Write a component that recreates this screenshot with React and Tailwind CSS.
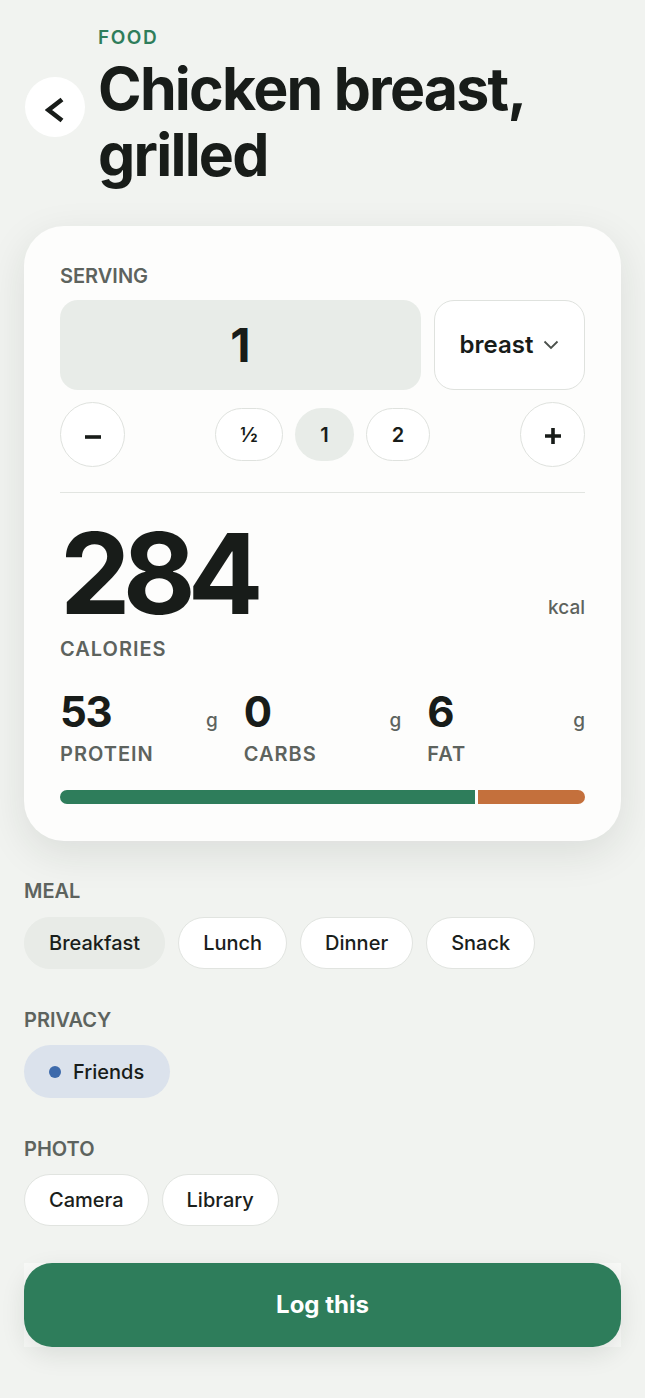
import React from "react";

const font = { fontFamily: "Inter, 'Noto Sans', sans-serif" };

function Pill({ children, active, className = "" }) {
  return (
    <div
      className={
        "h-[52px] px-[24px] rounded-full flex items-center justify-center text-[20px] font-medium text-[#1a1e1b] border " +
        (active ? "bg-[#e8ebe7] border-[#e8ebe7] " : "bg-white border-[#e1e4e0] ") +
        className
      }
    >
      {children}
    </div>
  );
}

function Label({ children, className = "" }) {
  return (
    <div className={"text-[20px] leading-[24px] font-semibold text-[#5d635e] " + className}>{children}</div>
  );
}

export default function App() {
  return (
    <div className="min-h-[1398px] w-[645px] bg-[#f1f3f0] text-[#181c19]" style={font}>
      {/* Header */}
      <div className="flex items-center pl-[25px] pt-[26px]">
        <div className="w-[60px] h-[60px] rounded-full bg-white flex items-center justify-center shrink-0">
          <svg width="20" height="26" viewBox="0 0 20 26" className="mt-[6px]">
            <path d="M17 2.5 L3.5 13 L17 23.5" fill="none" stroke="#181c19" strokeWidth="4.6" strokeLinejoin="miter" />
          </svg>
        </div>
        <div className="ml-[13px]">
          <div className="text-[19px] leading-[24px] font-semibold tracking-[0.08em] text-[#2e7d5b]">FOOD</div>
          <div className="mt-[6px] text-[59px] leading-[66px] font-bold tracking-[-0.03em] text-[#181c19]">
            Chicken breast,
            <br />
            grilled
          </div>
        </div>
      </div>

      {/* Card */}
      <div className="mx-[24px] mt-[38px] rounded-[40px] bg-[#fdfdfc] px-[36px] pt-[38px] pb-[37px] shadow-[0_12px_40px_rgba(30,40,30,0.10)]">
        <Label>SERVING</Label>
        <div className="mt-[12px] flex gap-[13px]">
          <div className="w-[361px] h-[90px] rounded-[18px] bg-[#e8ece8] flex items-center justify-center text-[47px] font-bold">
            1
          </div>
          <div className="flex-1 h-[90px] rounded-[20px] border border-[#dfe2de] bg-white flex items-center justify-center gap-[10px]">
            <span className="text-[24px] font-semibold">breast</span>
            <svg width="16" height="10" viewBox="0 0 16 10">
              <path d="M1.5 1.5 L8 8 L14.5 1.5" fill="none" stroke="#4a504b" strokeWidth="1.8" />
            </svg>
          </div>
        </div>
        <div className="mt-[12px] flex items-center justify-between">
          <div className="w-[65px] h-[65px] rounded-full border border-[#dfe2de] bg-white flex items-center justify-center">
            <svg width="18" height="6" viewBox="0 0 18 6" className="mt-[4px]">
              <path d="M1 3 H17" stroke="#181c19" strokeWidth="3.6" />
            </svg>
          </div>
          <div className="flex items-center gap-[12px]">
            <div className="w-[68px] h-[53px] rounded-full border border-[#dfe2de] bg-white flex items-center justify-center text-[20px] font-semibold">
              ½
            </div>
            <div className="w-[59px] h-[53px] rounded-full bg-[#e8ece8] flex items-center justify-center text-[20px] font-semibold">
              1
            </div>
            <div className="w-[64px] h-[53px] rounded-full border border-[#dfe2de] bg-white flex items-center justify-center text-[20px] font-semibold">
              2
            </div>
          </div>
          <div className="w-[65px] h-[65px] rounded-full border border-[#dfe2de] bg-white flex items-center justify-center">
            <svg width="18" height="18" viewBox="0 0 18 18" className="mt-[2px]">
              <path d="M1 9 H17 M9 1 V17" stroke="#181c19" strokeWidth="3.6" />
            </svg>
          </div>
        </div>
        <div className="mt-[25px] h-px bg-[#e2e5e1]" />
        <div className="mt-[40px] flex items-baseline justify-between">
          <div className="text-[112px] leading-[80px] font-bold tracking-[-0.07em]">284</div>
          <div className="text-[19px] font-medium text-[#5d635e]">kcal</div>
        </div>
        <div className="mt-[14px] text-[20px] leading-[24px] font-semibold tracking-[0.05em] text-[#5d635e]">CALORIES</div>
        <div className="mt-[30px] grid grid-cols-3 gap-x-[26px]">
          {[
            ["53", "PROTEIN"],
            ["0", "CARBS"],
            ["6", "FAT"],
          ].map(([v, l]) => (
            <div key={l}>
              <div className="flex items-baseline justify-between">
                <span className="text-[42px] leading-[42px] font-bold tracking-[-0.03em]">{v}</span>
                <span className="text-[19px] font-medium text-[#5d635e]">g</span>
              </div>
              <div className="mt-[7px] text-[20px] leading-[24px] font-semibold tracking-[0.05em] text-[#5d635e]">{l}</div>
            </div>
          ))}
        </div>
        <div className="mt-[24px] flex h-[14px] gap-[3px]">
          <div className="w-[415px] rounded-l-full bg-[#2e7d5b]" />
          <div className="flex-1 rounded-r-full bg-[#c4703c]" />
        </div>
      </div>

      {/* Sections */}
      <div className="px-[24px]">
        <Label className="mt-[38px]">MEAL</Label>
        <div className="mt-[14px] flex gap-[13px]">
          <Pill active>Breakfast</Pill>
          <Pill>Lunch</Pill>
          <Pill>Dinner</Pill>
          <Pill>Snack</Pill>
        </div>

        <Label className="mt-[39px]">PRIVACY</Label>
        <div className="mt-[13px] flex">
          <div className="h-[53px] pl-[25px] pr-[26px] rounded-full bg-[#dbe2ec] flex items-center gap-[12px] text-[20px] font-medium">
            <span className="w-[12px] h-[12px] rounded-full bg-[#3d6aab]" />
            Friends
          </div>
        </div>

        <Label className="mt-[39px]">PHOTO</Label>
        <div className="mt-[13px] flex gap-[13px]">
          <Pill>Camera</Pill>
          <Pill>Library</Pill>
        </div>

        <div className="mt-[37px] bg-[#f8f9f7]">
          <div className="h-[84px] rounded-[28px] bg-[#2e7d5b] flex items-center justify-center text-white text-[24px] font-bold shadow-[0_8px_24px_rgba(30,40,30,0.10)]">
            Log this
          </div>
        </div>
      </div>
    </div>
  );
}
